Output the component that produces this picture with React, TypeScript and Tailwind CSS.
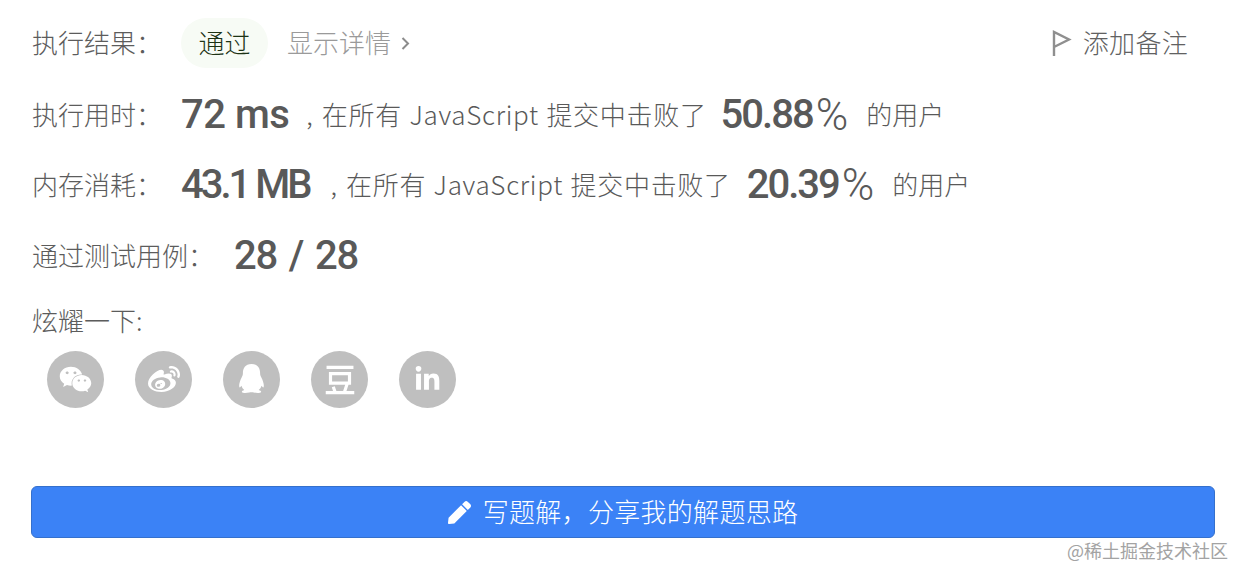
import { FaLinkedinIn, FaPen, FaWeibo, FaWeixin } from "react-icons/fa";
import { RiDoubanLine } from "react-icons/ri";

const cjk = "font-['Noto_Sans_CJK_SC',sans-serif]";
const num = "font-['Roboto','Noto_Sans_CJK_SC',sans-serif] font-medium text-[40px] text-[#595959] leading-none";
// light CJK sits low in its line box, nudge it up
const txt = "mb-[4px]";

const Stat = ({ label, value, digits, valueClass, commaGap, percentGap }: { label: string; value: string; digits: string; valueClass: string; commaGap: string; percentGap: string }) => (
  <div className="flex items-center h-[50px]">
    <span className={`${txt} w-[149px] shrink-0 text-[#5c5c5c]`}>{label}</span>
    <span className={`${num} ${valueClass}`}>{value}</span>
    <span className={`${txt} ${commaGap} text-[#595959]`}>,</span>
    <span className={`${txt} ml-[9px] text-[#595959] tracking-[0.7px] [word-spacing:1px]`}>在所有 JavaScript 提交中击败了</span>
    <span className={`${num} ${percentGap} tracking-[-2px]`}>{digits}</span>
    <span className="ml-[3px] font-['Roboto',sans-serif] font-light text-[44px] leading-none text-[#595959]">%</span>
    <span className={`${txt} ml-[18px] text-[#595959]`}>的用户</span>
  </div>
);

const QqIcon = () => (
  <svg width="29" height="33" viewBox="0 0 32 36" fill="currentColor">
    <path d="M16 1C9 1 6.500 6 6.500 11c0 2-.5 3-1.500 5-1.500 3-3 7-2.500 10 .3 1.500 1.500.5 2.500-1 .5 2 1.500 3.500 3 4.500-2 .7-3 1.500-2.500 2.500.7 1 5 1 8 .3 1.200-.3 3.800-.3 5 0 3 .7 7.300.7 8-.3.5-1-.5-1.800-2.500-2.500 1.500-1 2.500-2.500 3-4.500 1 1.500 2.200 2.500 2.500 1 .5-3-1-7-2.500-10-1-2-1.500-3-1.500-5C25.500 6 23 1 16 1z" />
  </svg>
);

export default function App() {
  return (
    <div className={`${cjk} relative w-[1246px] h-[576px] bg-white pl-[32px] pr-[31px] pt-[18px] text-[26px] font-light overflow-hidden`}>
      <div className="flex items-center h-[50px]">
        <span className={`${txt} w-[149px] shrink-0 text-[#5c5c5c]`}>执行结果&#xFF1A;</span>
        <span className="w-[87px] h-[50px] pb-[4px] flex items-center justify-center rounded-[25px] bg-[#f7fbf5] text-[#1d3315]">通过</span>
        <span className={`${txt} ml-[19px] text-[#9a9a9a]`}>显示详情</span>
        <svg width="9" height="13" viewBox="0 0 9 13" className="ml-[10px] mt-[1px]" fill="none" stroke="#8c8c8c" strokeWidth="2">
          <path d="M1.500 1 7 6.500 1.500 12" />
        </svg>
        <div className="ml-auto mr-[27px] flex items-center">
          <svg width="20" height="26" viewBox="0 0 20 26" fill="none" stroke="#8f8f8f" strokeWidth="2.4">
            <path d="M2 26V2l15 7.500L2 17" />
          </svg>
          <span className={`${txt} ml-[11px] text-[#616161] tracking-[0.3px]`}>添加备注</span>
        </div>
      </div>

      <div className="mt-[22px]">
        <Stat label="执行用时&#xFF1A;" value="72 ms" digits="50.88" valueClass="tracking-[-0.5px]" commaGap="ml-[17px]" percentGap="ml-[14px]" />
      </div>
      <div className="mt-[20px]">
        <Stat label="内存消耗&#xFF1A;" value="43.1 MB" digits="20.39" valueClass="tracking-[-3px]" commaGap="ml-[21px]" percentGap="ml-[16px]" />
      </div>

      <div className="mt-[21px] flex items-center h-[50px]">
        <span className={`${txt} w-[202px] shrink-0 text-[#5c5c5c]`}>通过测试用例&#xFF1A;</span>
        <span className={`${num} [word-spacing:3px] tracking-[-1.2px]`}>28 / 28</span>
      </div>

      <div className="mt-[25px] h-[30px] pb-[4px] flex items-center text-[#5c5c5c]">炫耀一下:</div>

      <div className="mt-[15px] ml-[15px] flex gap-[31px] text-white">
        <div className="w-[57px] h-[57px] rounded-full bg-[#bfbfbf] flex items-center justify-center"><FaWeixin size={33} /></div>
        <div className="w-[57px] h-[57px] rounded-full bg-[#bfbfbf] flex items-center justify-center"><FaWeibo size={32} /></div>
        <div className="w-[57px] h-[57px] rounded-full bg-[#bfbfbf] flex items-center justify-center"><QqIcon /></div>
        <div className="w-[57px] h-[57px] rounded-full bg-[#bfbfbf] flex items-center justify-center"><RiDoubanLine size={38} /></div>
        <div className="w-[57px] h-[57px] rounded-full bg-[#bfbfbf] flex items-center justify-center"><FaLinkedinIn size={27} /></div>
      </div>

      <button className="mt-[78px] -ml-[1px] w-[1184px] h-[52px] flex items-center justify-center rounded-[6px] bg-[#3b82f6] border border-[#3570cc] text-white">
        <FaPen size={23} />
        <span className="ml-[12px] mb-[3px] tracking-[0.3px]">写题解&#xFF0C;分享我的解题思路</span>
      </button>

      <div className="absolute left-[1067px] top-[537px] text-[18px] font-normal text-[#a3a3a3] whitespace-nowrap">@稀土掘金技术社区</div>
    </div>
  );
}
